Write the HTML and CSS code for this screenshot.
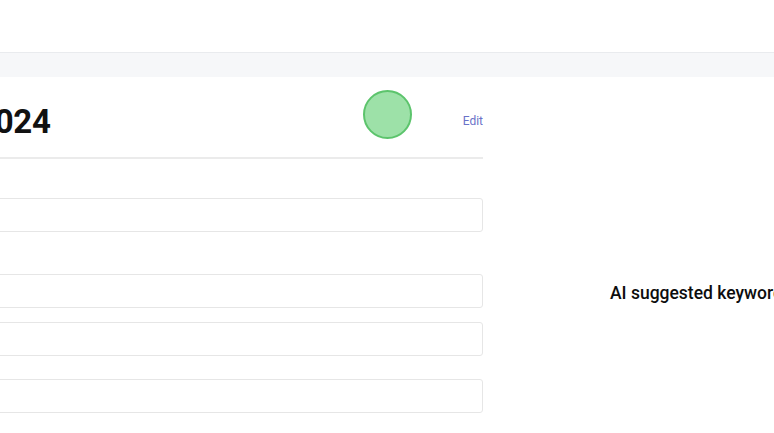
FILE: index.html
```html
<!DOCTYPE html>
<html lang="en">
<head>
    <meta charset="UTF-8">
    <meta name="viewport" content="width=device-width, initial-scale=1.0">
    <title>Keyword Report</title>
    <link rel="stylesheet" href="styles.css">
</head>
<body>
    <div class="topbar"></div>
    <div class="subbar"></div>

    <div class="page">
        <div class="editor">
            <div class="editor-header">
                <h1 class="title">2024</h1>
                <div class="status-dot"></div>
                <a class="edit-link" href="#">Edit</a>
            </div>

            <div class="field first">
                <div class="field-box"></div>
            </div>
            <div class="field second">
                <div class="field-box"></div>
            </div>
            <div class="field">
                <div class="field-box"></div>
            </div>
            <div class="field fourth">
                <div class="field-box"></div>
            </div>
        </div>

        <div class="suggestions">
            <h3>AI suggested keywords</h3>
        </div>
    </div>
</body>
</html>
```

FILE: styles.css
```css
body {
    font-family: Roboto, 'Liberation Sans', Arial, sans-serif;
    background-color: #fff;
    margin: 0;
    padding: 0;
    overflow: hidden;
    color: #111;
}

.topbar {
    height: 52px;
    background-color: #fff;
    border-bottom: 1px solid #e9ebee;
}

.subbar {
    height: 24px;
    background-color: #f6f7f9;
}

.page {
    display: flex;
    white-space: nowrap;
}

.editor {
    width: 523px;
    margin-left: -40px;
    flex-shrink: 0;
}

.editor-header {
    display: flex;
    align-items: center;
    height: 80px;
    border-bottom: 2px solid #ebebeb;
}

.title {
    font-size: 33px;
    font-weight: 700;
    margin: 0 0 0 16px;
    padding-top: 8px;
    letter-spacing: -0.3px;
}

.status-dot {
    width: 45px;
    height: 45px;
    border-radius: 50%;
    background-color: #9de1a8;
    border: 2px solid #5cc46c;
    margin-left: auto;
    margin-right: 51px;
    margin-top: -5px;
}

.edit-link {
    font-size: 12px;
    color: #6a72c8;
    text-decoration: none;
    margin-top: 8px;
}

.field {
    margin-top: 14px;
}

.field.first {
    margin-top: 39px;
}

.field.second {
    margin-top: 42px;
}

.field.fourth {
    margin-top: 23px;
}

.field-box {
    height: 32px;
    border: 1px solid #e6e6e6;
    border-radius: 3px;
    background-color: #fff;
}

.suggestions {
    flex: 1;
    padding-left: 127px;
    padding-top: 206px;
}

.suggestions h3 {
    font-size: 17.5px;
    font-weight: 500;
    margin: 0;
    color: #0d0d0d;
}
```
